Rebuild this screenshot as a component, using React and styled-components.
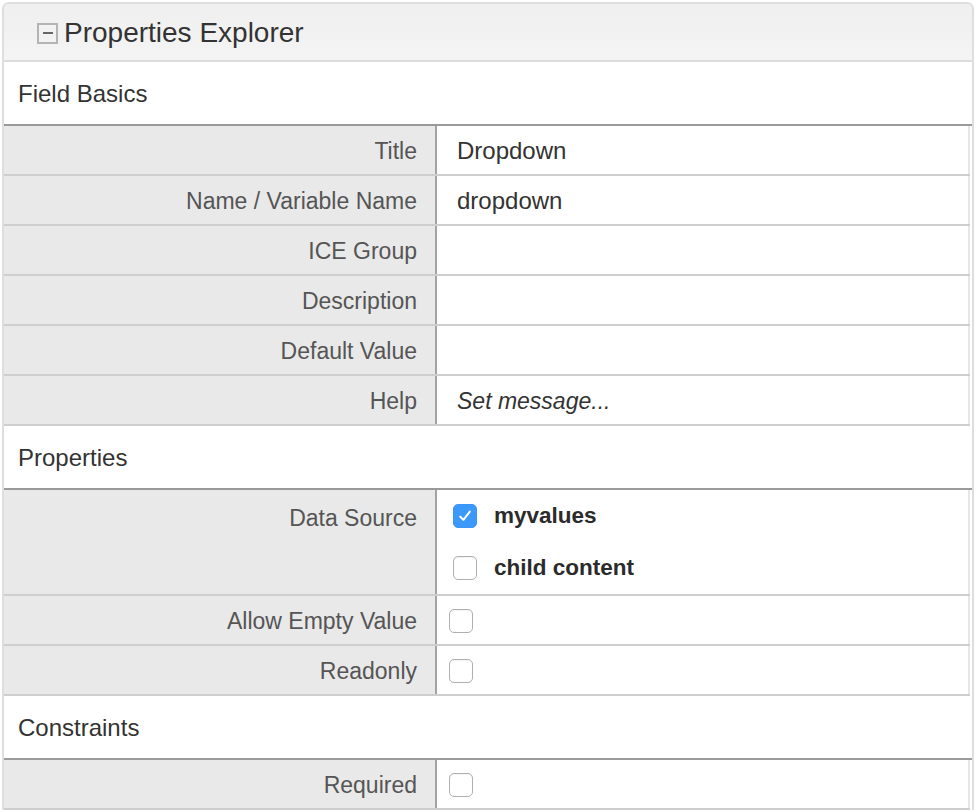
import React from "react";
import styled, { createGlobalStyle } from "styled-components";

const Global = createGlobalStyle`
  html, body { margin: 0; padding: 0; background: #fff; }
  body { font-family: "Liberation Sans", Arial, Helvetica, sans-serif; }
  * { box-sizing: border-box; }
`;

const Panel = styled.div`
  margin: 2px 0 0 2px;
  width: 972px;
  border: 2px solid #dedede;
  border-bottom: none;
  border-radius: 7px 7px 0 0;
  overflow: hidden;
  background: #fff;
`;

const Header = styled.div`
  height: 58px;
  display: flex;
  align-items: center;
  padding: 2px 0 0 33px;
  gap: 6px;
  background: linear-gradient(#efefef, #f4f4f4);
  border-bottom: 2px solid #dcdcdc;
  font-size: 28px;
  color: #333;
`;

const Collapse = styled.span`
  width: 21px;
  height: 21px;
  border: 2px solid #b4b4b4;
  background: #f2f2f2;
  display: flex;
  align-items: center;
  justify-content: center;
  &::after {
    content: "";
    width: 10px;
    height: 2px;
    background: #666;
  }
`;

const Section = styled.div`
  height: 64px;
  padding: 2px 14px 0;
  display: flex;
  align-items: center;
  font-size: 24px;
  color: #333;
  border-bottom: 2px solid #9a9a9a;
`;

const Row = styled.div`
  display: grid;
  grid-template-columns: 433px 1fr;
  border-bottom: 2px solid #cfcfcf;
  margin-right: 2px;
`;

const Label = styled.div`
  background: #e9e9e9;
  border-right: 2px solid #a3a3a3;
  text-align: right;
  padding: 2px 18px 0;
  font-size: 23px;
  color: #555;
  line-height: ${(p) => p.$lh || 46}px;
  min-height: 48px;
`;

const Value = styled.div`
  padding: 2px 20px 0;
  font-size: ${(p) => (p.$italic ? 23 : 24)}px;
  color: #333;
  line-height: 46px;
  min-height: 48px;
  font-style: ${(p) => (p.$italic ? "italic" : "normal")};
  border-right: 2px solid #e6e6e6;
  display: ${(p) => (p.$check ? "flex" : "block")};
  align-items: center;
`;

const Options = styled.div`
  padding: 0 0 0 16px;
  border-right: 2px solid #e6e6e6;
`;

const Option = styled.label`
  height: 52px;
  display: flex;
  align-items: center;
  gap: 17px;
  font-size: 22.5px;
  font-weight: bold;
  color: #2b2b2b;
`;

const Box = styled.span`
  width: 24px;
  height: 24px;
  border-radius: 5px;
  border: 1px solid ${(p) => (p.$on ? "#3d95f5" : "#b0b0b0")};
  background: ${(p) => (p.$on ? "#3b99fc" : "#fff")};
  box-shadow: ${(p) => (p.$on ? "none" : "inset 0 1px 1px rgba(0,0,0,0.05)")};
  display: inline-flex;
  align-items: center;
  justify-content: center;
  flex: none;
  margin-left: ${(p) => p.$ml || 0}px;
`;

const Check = ({ on, ml }) => (
  <Box $on={on} $ml={ml}>
    {on && (
      <svg width="16" height="16" viewBox="0 0 16 16">
        <path d="M3.2 8.6 L6.4 11.8 L12.8 3.6" fill="none" stroke="#fff" strokeWidth="2" strokeLinecap="round" strokeLinejoin="round" />
      </svg>
    )}
  </Box>
);

const Field = ({ label, children, italic, check }) => (
  <Row>
    <Label>{label}</Label>
    <Value $italic={italic} $check={check}>{children}</Value>
  </Row>
);

export default function App() {
  return (
    <>
      <Global />
      <Panel>
        <Header>
          <Collapse />
          Properties Explorer
        </Header>
        <Section>Field Basics</Section>
        <Field label="Title">Dropdown</Field>
        <Field label="Name / Variable Name">dropdown</Field>
        <Field label="ICE Group" />
        <Field label="Description" />
        <Field label="Default Value" />
        <Field label="Help" italic>Set message...</Field>
        <Section>Properties</Section>
        <Row>
          <Label $lh={52}>Data Source</Label>
          <Options>
            <Option><Check on />myvalues</Option>
            <Option><Check />child content</Option>
          </Options>
        </Row>
        <Field label="Allow Empty Value" check><Check ml={-8} /></Field>
        <Field label="Readonly" check><Check ml={-8} /></Field>
        <Section>Constraints</Section>
        <Field label="Required" check><Check ml={-8} /></Field>
      </Panel>
    </>
  );
}
